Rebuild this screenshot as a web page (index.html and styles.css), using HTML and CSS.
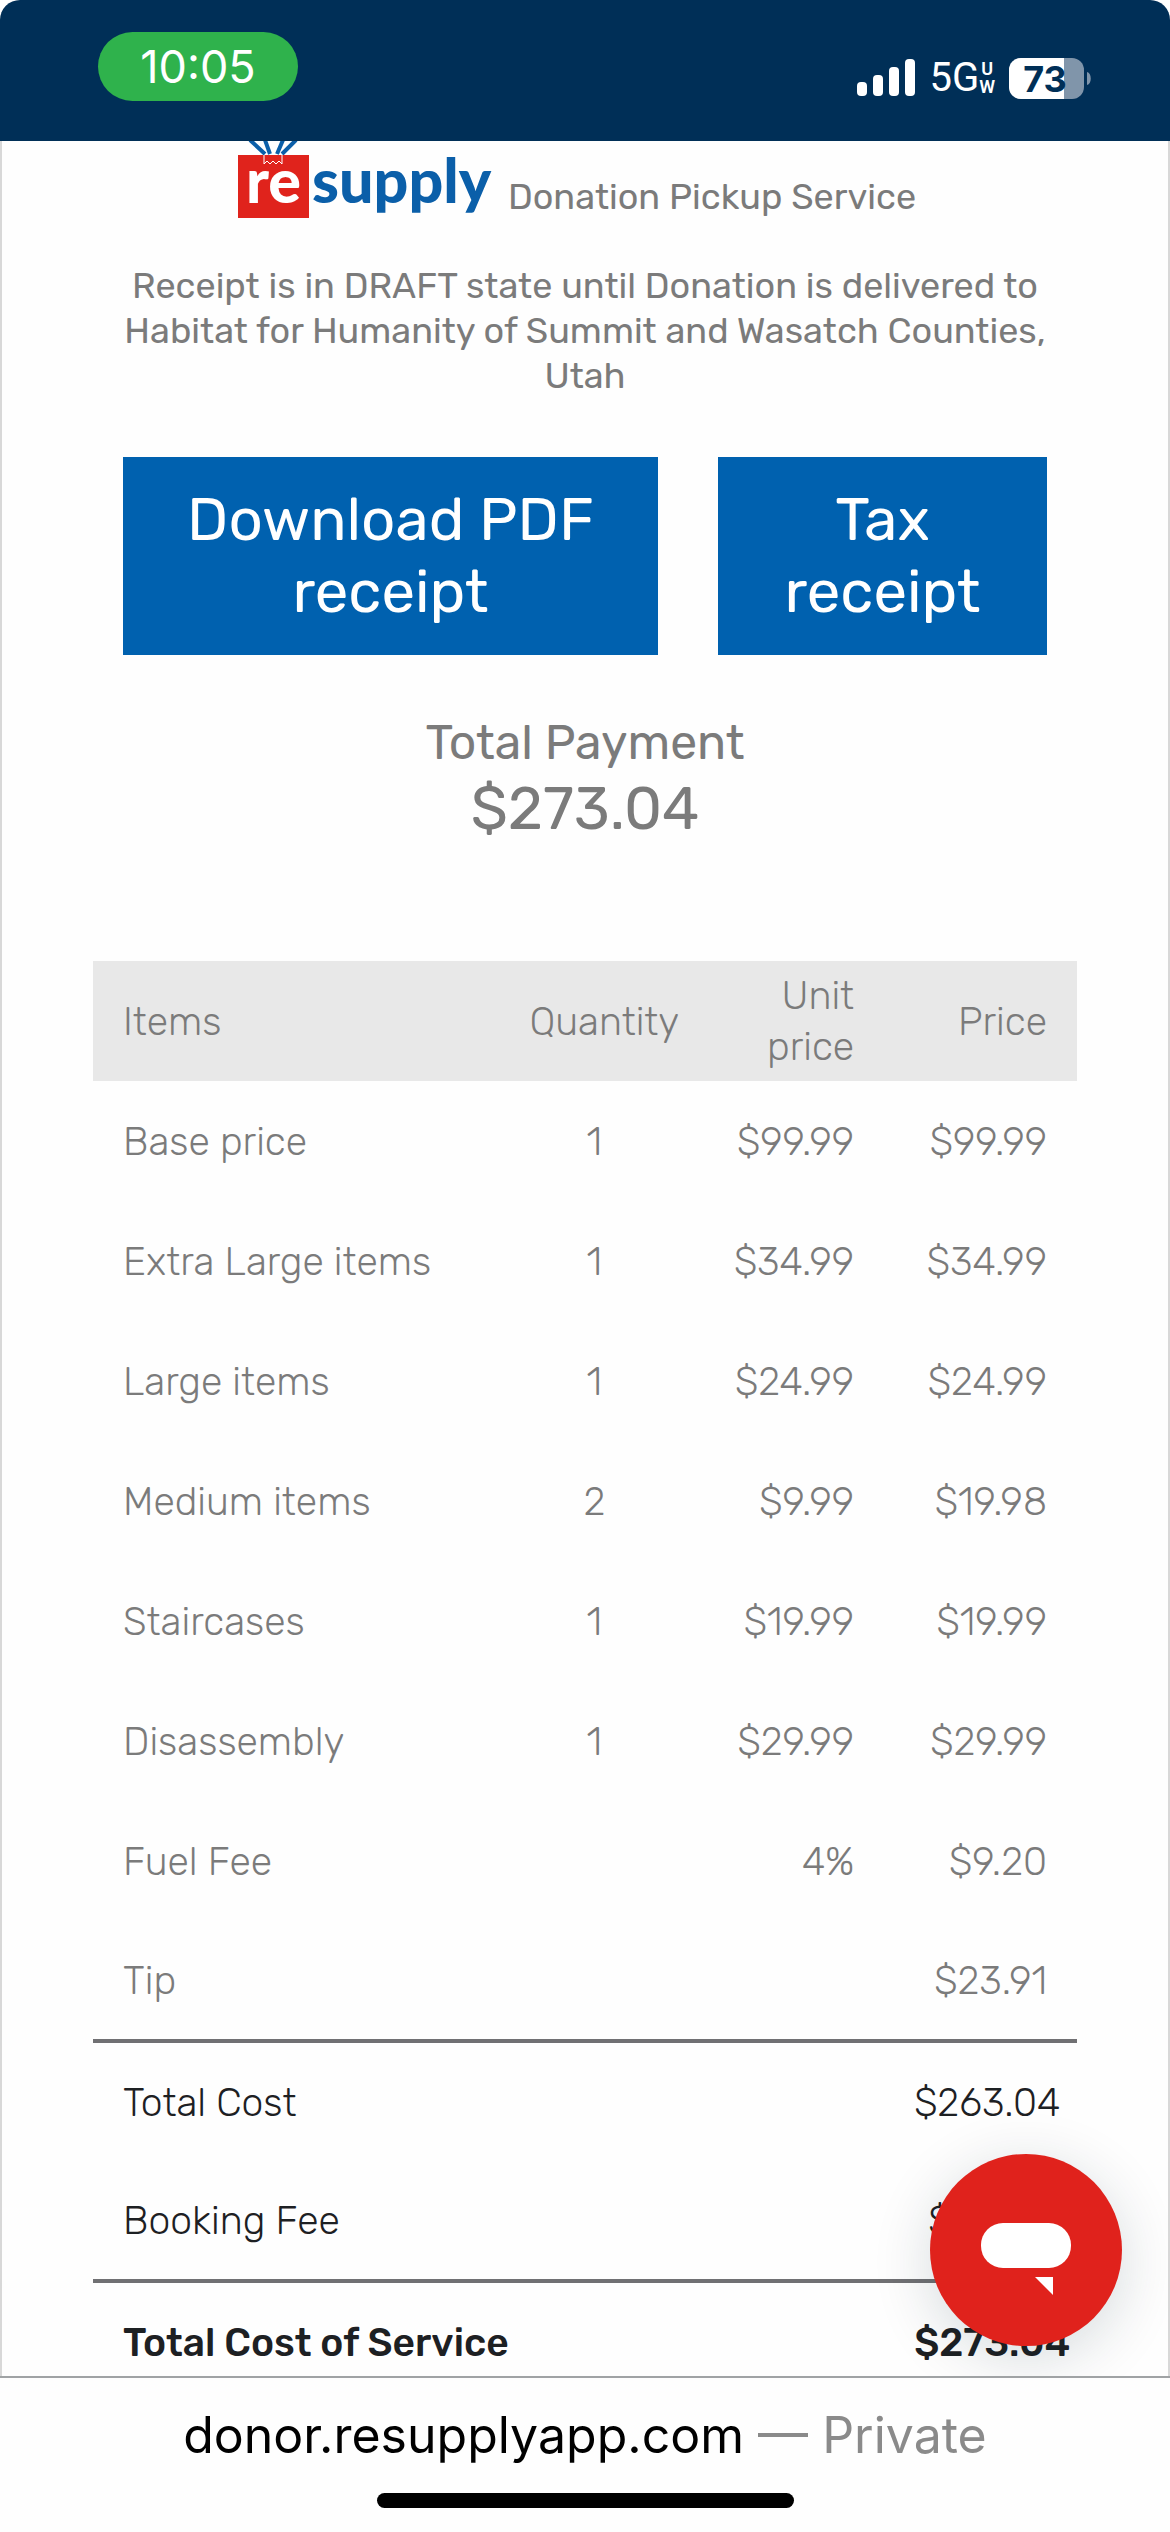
FILE: index.html
```html
<!DOCTYPE html>
<html lang="en">
<head>
    <meta charset="UTF-8">
    <meta name="viewport" content="width=device-width, initial-scale=1.0">
    <title>Donation receipt</title>
    <link rel="stylesheet" href="styles.css">
</head>
<body>
    <div class="status-bar">
        <div class="time">10:05</div>
        <div class="status-icons">
            <svg class="signal" viewBox="0 0 58 38" aria-hidden="true">
                <rect x="0" y="23" width="10" height="14" rx="4"/>
                <rect x="16" y="16" width="10" height="21" rx="4"/>
                <rect x="32" y="8" width="10" height="29" rx="4"/>
                <rect x="48" y="0" width="10" height="37" rx="4"/>
            </svg>
            <div class="network">5G<span class="network-type"><span>U</span><span>W</span></span></div>
            <svg class="battery" viewBox="0 0 83 41" role="img" aria-label="Battery 73%">
                <clipPath id="charge"><rect width="55" height="41"/></clipPath>
                <rect width="75" height="41" rx="12" fill="#8095aa"/>
                <rect width="75" height="41" rx="12" fill="#fff" clip-path="url(#charge)"/>
                <path d="M78 14c5 1 5 12 0 13z" fill="#8095aa"/>
                <text x="36" y="34" class="battery-text">73</text>
            </svg>
        </div>
    </div>

    <main class="page">
        <header class="header">
            <svg class="logo" viewBox="0 0 258 78" role="img" aria-label="resupply">
                <g stroke="#0b5fa9" stroke-width="4" fill="none">
                    <path d="M12 -1L27 13M27 -1L32 13M45 -1L39 13M58 -1L44 13"/>
                </g>
                <rect x="0" y="14" width="71" height="63" fill="#e0231c"/>
                <path d="M26 14V23l3 -3 3 3 3 -3 3 3 3 -3 3 3V14" fill="none" stroke="#fff" stroke-width="1"/>
                <text x="8" y="62" class="logo-text" fill="#fff">re</text>
                <text x="74" y="62" class="logo-text" fill="#0b5fa9">supply</text>
            </svg>
            <span>Donation Pickup Service</span>
        </header>

        <p class="notice">Receipt is in DRAFT state until Donation is delivered to Habitat for Humanity of Summit and Wasatch Counties, Utah</p>

        <div class="buttons">
            <button type="button" class="btn">Download PDF receipt</button>
            <button type="button" class="btn">Tax receipt</button>
        </div>

        <div class="payment">
            <div class="payment-title">Total Payment</div>
            <div class="payment-sum">$273.04</div>
        </div>

        <table class="items">
            <thead>
                <tr>
                    <th class="col-name">Items</th>
                    <th class="col-qty">Quantity</th>
                    <th class="col-unit">Unit price</th>
                    <th class="col-price">Price</th>
                </tr>
            </thead>
            <tbody>
                <tr><td>Base price</td><td>1</td><td>$99.99</td><td>$99.99</td></tr>
                <tr><td>Extra Large items</td><td>1</td><td>$34.99</td><td>$34.99</td></tr>
                <tr><td>Large items</td><td>1</td><td>$24.99</td><td>$24.99</td></tr>
                <tr><td>Medium items</td><td>2</td><td>$9.99</td><td>$19.98</td></tr>
                <tr><td>Staircases</td><td>1</td><td>$19.99</td><td>$19.99</td></tr>
                <tr><td>Disassembly</td><td>1</td><td>$29.99</td><td>$29.99</td></tr>
                <tr><td>Fuel Fee</td><td></td><td>4%</td><td>$9.20</td></tr>
                <tr><td>Tip</td><td></td><td></td><td>$23.91</td></tr>
            </tbody>
            <tfoot>
                <tr class="line"><td colspan="3">Total Cost</td><td>$263.04</td></tr>
                <tr><td colspan="3">Booking Fee</td><td>$10.00</td></tr>
                <tr class="line total"><td colspan="3">Total Cost of Service</td><td>$273.04</td></tr>
            </tfoot>
        </table>

        <button type="button" class="chat" aria-label="Open chat">
            <svg viewBox="0 0 90 72" aria-hidden="true">
                <rect width="90" height="45" rx="22"/>
                <path d="M54 54H72V72z"/>
            </svg>
        </button>
    </main>

    <footer class="browser-bar">
        <div class="address">donor.resupplyapp.com <span>— Private</span></div>
        <div class="home-indicator"></div>
    </footer>
</body>
</html>
```
FILE: styles.css
```css
* {
    box-sizing: border-box;
}

body {
    margin: 0;
    height: 100vh;
    display: flex;
    flex-direction: column;
    background: #fff;
    color: #7b7b7b;
    font-family: Rubik, Roboto, sans-serif;
    font-size: 36px;
    line-height: 45px;
}

/* Status bar */
.status-bar {
    flex: none;
    height: 141px;
    padding: 32px 78px 0 98px;
    display: flex;
    justify-content: space-between;
    align-items: flex-start;
    background: #002f57;
    border-radius: 20px 20px 0 0;
    color: #fff;
    font-family: Inter, sans-serif;
}

.time {
    width: 200px;
    height: 69px;
    border-radius: 35px;
    background: #2fb24c;
    font-size: 45px;
    line-height: 70px;
    text-align: center;
}

.status-icons {
    display: flex;
    align-items: center;
    gap: 14px;
    padding-top: 25px;
}

.signal {
    width: 58px;
    height: 38px;
    fill: #fff;
}

.network {
    display: flex;
    align-items: center;
    font-family: Roboto, sans-serif;
    font-size: 40px;
    line-height: 42px;
}

.network-type {
    display: flex;
    flex-direction: column;
    align-items: center;
    font-size: 18px;
    font-weight: 600;
    line-height: 18px;
}

.battery {
    width: 83px;
    height: 41px;
    overflow: visible;
}

.battery-text {
    font-size: 36px;
    font-weight: 700;
    text-anchor: middle;
    fill: #002f57;
}

/* Receipt */
.page {
    position: relative;
    flex: 1;
    min-height: 0;
    overflow: hidden;
    padding: 0 91px;
    background: #fefefe;
    border: solid #d8d8d8;
    border-width: 0 2px;
}

.header {
    display: flex;
    justify-content: center;
    align-items: flex-end;
    gap: 12px;
    padding-right: 16px;
}

.logo {
    width: 258px;
    height: 78px;
}

.logo-text {
    font-family: Lato, sans-serif;
    font-size: 61px;
    font-weight: 900;
}

.notice {
    margin: 44px 30px 0;
    text-align: center;
}

.buttons {
    display: grid;
    grid-template-columns: 535fr 329fr;
    gap: 60px;
    margin: 59px 30px 0;
}

.btn {
    padding: 27px 60px;
    border: none;
    background: #0061af;
    color: #fff;
    font: inherit;
    font-size: 60px;
    line-height: 72px;
    cursor: pointer;
}

.payment {
    padding-top: 58px;
    text-align: center;
}

.payment-title {
    font-size: 48px;
    line-height: 60px;
}

.payment-sum {
    font-size: 60px;
    line-height: 72px;
}

.items {
    width: 100%;
    margin-top: 116px;
    border-collapse: collapse;
    table-layout: fixed;
    font-size: 39px;
    font-weight: 300;
    line-height: 51px;
}

.items th {
    height: 120px;
    padding: 10px 30px 8px;
    background: #e8e8e8;
    font-weight: 300;
}

.items td {
    height: 120px;
    padding: 2px 30px 0;
    white-space: nowrap;
}

.col-name {
    width: 41.3%;
}

.col-qty {
    width: 19.3%;
}

.col-unit {
    width: 19.8%;
}

.col-price {
    width: 19.6%;
}

.items th,
.items td {
    text-align: center;
}

.items th:first-child,
.items td:first-child {
    text-align: left;
}

.items th:nth-child(n+3),
.items td:nth-child(n+3),
.items td:last-child {
    text-align: right;
}

.items tfoot {
    color: #1d2023;
}

.items .line td {
    border-top: 4px solid #707073;
}

.items .total td {
    font-weight: 500;
}

.chat {
    position: absolute;
    right: 46px;
    bottom: 30px;
    width: 192px;
    height: 192px;
    padding: 18px 0 0;
    border: none;
    border-radius: 50%;
    background: #e0221c;
    box-shadow: 0 12px 60px rgba(0, 40, 50, 0.16);
    cursor: pointer;
}

.chat svg {
    display: block;
    width: 90px;
    height: 72px;
    margin: 0 auto;
    fill: #fff;
}

/* Browser bar */
.browser-bar {
    flex: none;
    height: 156px;
    padding-top: 27px;
    display: flex;
    flex-direction: column;
    align-items: center;
    gap: 28px;
    border-top: 2px solid #a0a3a5;
    background: #fefefe;
    font-family: Inter, sans-serif;
}

.address {
    color: #000;
    font-size: 50px;
    line-height: 60px;
}

.address span {
    color: #8a8a8a;
}

.home-indicator {
    width: 417px;
    height: 15px;
    border-radius: 8px;
    background: #000;
}
```
